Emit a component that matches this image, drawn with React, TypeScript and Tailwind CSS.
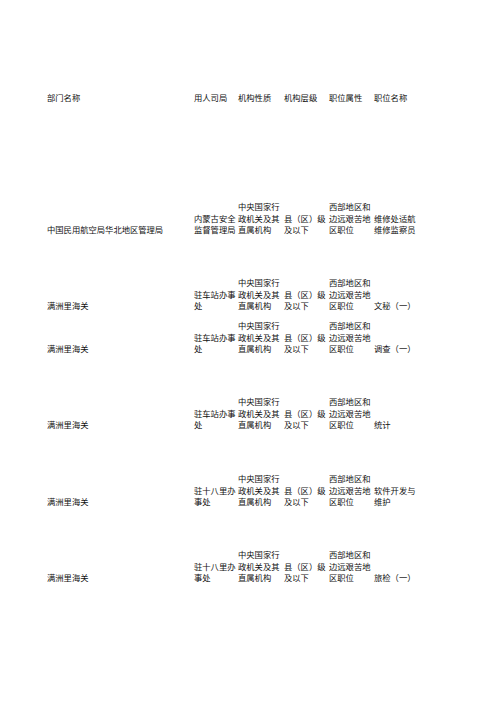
const rows: { h: string; cells: string[] }[] = [
  {
    h: 'h-[132px]',
    cells: ['中国民用航空局华北地区管理局', '内蒙古安全监督管理局', '中央国家行政机关及其直属机构', '县（区）级及以下', '西部地区和边远艰苦地区职位', '维修处适航维修监察员'],
  },
  {
    h: 'h-[76px]',
    cells: ['满洲里海关', '驻车站办事处', '中央国家行政机关及其直属机构', '县（区）级及以下', '西部地区和边远艰苦地区职位', '文秘（一）'],
  },
  {
    h: 'h-[43px]',
    cells: ['满洲里海关', '驻车站办事处', '中央国家行政机关及其直属机构', '县（区）级及以下', '西部地区和边远艰苦地区职位', '调查（一）'],
  },
  {
    h: 'h-[76px]',
    cells: ['满洲里海关', '驻车站办事处', '中央国家行政机关及其直属机构', '县（区）级及以下', '西部地区和边远艰苦地区职位', '统计'],
  },
  {
    h: 'h-[77px]',
    cells: ['满洲里海关', '驻十八里办事处', '中央国家行政机关及其直属机构', '县（区）级及以下', '西部地区和边远艰苦地区职位', '软件开发与维护'],
  },
  {
    h: 'h-[76px]',
    cells: ['满洲里海关', '驻十八里办事处', '中央国家行政机关及其直属机构', '县（区）级及以下', '西部地区和边远艰苦地区职位', '旅检（一）'],
  },
];

const widths = ['w-[147px]', 'w-[44px]', 'w-[46px]', 'w-[45px]', 'w-[45px]', 'w-[46px]'];

const header = ['部门名称', '用人司局', '机构性质', '机构层级', '职位属性', '职位名称'];

function Row({ cells, h }: { cells: string[]; h: string }) {
  return (
    <div className={`flex items-end ${h}`}>
      {cells.map((c, i) => (
        <div key={i} className={`${widths[i]} shrink-0 break-all`}>
          {c}
        </div>
      ))}
    </div>
  );
}

export default function App() {
  return (
    <div className="w-[496px] h-[702px] bg-white overflow-hidden">
      <div
        className="pt-[92px] pl-[47px] text-[8.3px] leading-[11.6px] text-[#111111]"
        style={{ fontFamily: '"Noto Sans CJK SC", "Noto Sans", sans-serif' }}
      >
        <Row cells={header} h="h-[12px]" />
        {rows.map((r, i) => (
          <Row key={i} cells={r.cells} h={r.h} />
        ))}
      </div>
    </div>
  );
}
